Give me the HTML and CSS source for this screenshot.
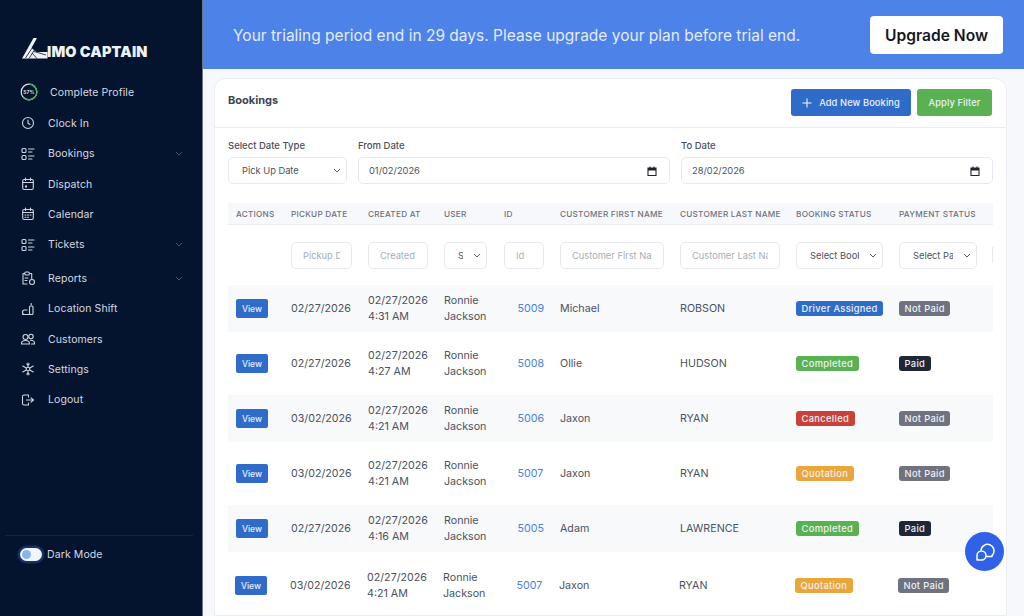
FILE: index.html
```html
<!DOCTYPE html>
<html lang="en">
<head>
<meta charset="utf-8">
<title>Limo Captain - Bookings</title>
<link rel="stylesheet" href="styles.css">
</head>
<body>
<div class="app">
  <aside class="sidebar">
    <div class="logo">
      <svg class="logo-mark" width="26" height="21" viewBox="0 0 26 21"><path d="M0 20.500 L11.500 0 L15 0 L9.500 10 L14.500 14 L25.500 14 L25.500 20.500 Z" fill="#eef1f5"/><path d="M3.500 20 L11.500 8 M7 20.500 L13 11 M10 15 L15 20.500 M12 13.500 L24 17" stroke="#04142f" stroke-width=".8" fill="none"/></svg>
      <span class="logo-text">IMO CAPTAIN</span>
    </div>
    <nav class="nav">
      <a class="nav-item nav-profile">
        <svg class="ring" width="18" height="18" viewBox="0 0 18 18"><circle cx="9" cy="9" r="7.800" fill="none" stroke="#dfe3ea" stroke-width="1.200"/><path d="M9 1.200 A7.800 7.800 0 1 1 3.400 14.400" fill="none" stroke="#44a947" stroke-width="1.200"/><text x="9" y="10.800" text-anchor="middle" class="ring-text">57%</text></svg>
        <span>Complete Profile</span>
      </a>
      <a class="nav-item">
        <svg class="ico" viewBox="0 0 16 16"><circle cx="8" cy="8" r="5.500"/><path d="M8 5v3.200l2 1.300"/></svg>
        <span>Clock In</span>
      </a>
      <a class="nav-item">
        <svg class="ico" viewBox="0 0 16 16"><rect x="2" y="2.500" width="4" height="4" rx="1"/><rect x="2" y="9.500" width="4" height="4" rx="1"/><path d="M8.500 3h5.500M8.500 6h3.500M8.500 10h5.500M8.500 13h3.500"/></svg>
        <span>Bookings</span>
        <svg class="caret" viewBox="0 0 8 5"><path d="M1 1l3 3 3-3"/></svg>
      </a>
      <a class="nav-item">
        <svg class="ico" viewBox="0 0 16 16"><rect x="2.700" y="3.500" width="10.600" height="10" rx="1.500"/><path d="M2.700 6.500h10.600M5.500 2v2.500M10.500 2v2.500"/><rect x="5" y="9.500" width="2" height="2" fill="#cfd5de" stroke="none"/></svg>
        <span>Dispatch</span>
      </a>
      <a class="nav-item">
        <svg class="ico" viewBox="0 0 16 16"><rect x="2.700" y="3.500" width="10.600" height="10" rx="1.500"/><path d="M2.700 6.500h10.600M5.500 2v2.500M10.500 2v2.500M5 9h1M7.500 9h1M10 9h1M5 11.300h1M7.500 11.300h1"/></svg>
        <span>Calendar</span>
      </a>
      <a class="nav-item nav-gap">
        <svg class="ico" viewBox="0 0 16 16"><rect x="2" y="2.500" width="4" height="4" rx="1"/><rect x="2" y="9.500" width="4" height="4" rx="1"/><path d="M8.500 3h5.500M8.500 6h3.500M8.500 10h5.500M8.500 13h3.500"/></svg>
        <span>Tickets</span>
        <svg class="caret" viewBox="0 0 8 5"><path d="M1 1l3 3 3-3"/></svg>
      </a>
      <a class="nav-item">
        <svg class="ico" viewBox="0 0 16 16"><path d="M10.500 3.500h1.200v5M7 14H3V3.500h1.500"/><rect x="4.800" y="2" width="4.500" height="3" rx="1"/><path d="M5 8h3M5 10.500h2"/><circle cx="12" cy="12" r="2.500"/></svg>
        <span>Reports</span>
        <svg class="caret" viewBox="0 0 8 5"><path d="M1 1l3 3 3-3"/></svg>
      </a>
      <a class="nav-item">
        <svg class="ico" viewBox="0 0 16 16"><path d="M2.500 13.500h7.500M7 9H4.500C3 9 2.500 10 2.500 11.200S3 13.500 4.500 13.500"/><rect x="9.500" y="5" width="3.500" height="8.500" rx="1"/><path d="M11.200 2.500v1.500"/></svg>
        <span>Location Shift</span>
      </a>
      <a class="nav-item">
        <svg class="ico" viewBox="0 0 16 16"><circle cx="5.500" cy="6" r="2.500"/><circle cx="11" cy="5.500" r="2.200"/><path d="M1.500 13v-.5c0-2 1.500-3 4-3s4 1 4 3v.5zM10.500 9.200c2.500 0 4 1 4 3v.800h-3"/></svg>
        <span>Customers</span>
      </a>
      <a class="nav-item">
        <svg class="ico" viewBox="0 0 16 16"><circle cx="8" cy="8" r="1.800"/><path d="M8 2v3.500M8 10.500V14M2.800 5l3 1.800M10.200 9.200l3 1.800M13.200 5l-3 1.800M5.800 9.200l-3 1.800"/><path d="M6.800 2.800L8 4l1.200-1.200M6.800 13.200L8 12l1.200 1.200"/></svg>
        <span>Settings</span>
      </a>
      <a class="nav-item">
        <svg class="ico" viewBox="0 0 16 16"><path d="M8.500 3H4a1.500 1.500 0 0 0-1.500 1.500v7A1.500 1.500 0 0 0 4 13h4.500M8.500 3v2M8.500 13v-2M6.500 8h7M11 5.800L13.500 8 11 10.200"/></svg>
        <span>Logout</span>
      </a>
    </nav>
    <div class="dark-mode">
      <span class="toggle"><span class="toggle-knob"></span></span>
      <span>Dark Mode</span>
    </div>
  </aside>

  <main class="main">
    <header class="banner">
      <p class="banner-text">Your trialing period end in 29 days. Please upgrade your plan before trial end.</p>
      <button class="upgrade">Upgrade Now</button>
    </header>

    <section class="card">
      <div class="card-head">
        <h1 class="card-title">Bookings</h1>
        <div class="card-actions">
          <button class="btn btn-blue">
            <svg width="10" height="10" viewBox="0 0 10 10"><path d="M5 .5v9M.5 5h9" stroke="#fff" stroke-width="1" fill="none"/></svg>
            Add New Booking
          </button>
          <button class="btn btn-green">Apply Filter</button>
        </div>
      </div>

      <div class="filters">
        <div class="field field-type">
          <label class="field-label">Select Date Type</label>
          <div class="select-wrap">
            <select class="control select-main"><option>Pick Up Date</option></select>
            <svg class="chev" viewBox="0 0 8 5"><path d="M1 1l3 3 3-3"/></svg>
          </div>
        </div>
        <div class="field field-date">
          <label class="field-label">From Date</label>
          <div class="control date-box">
            <span>01/02/2026</span>
            <svg width="10" height="10" viewBox="0 0 10 10"><path d="M1 2h8v7.500H1z" fill="none" stroke="#1f2430" stroke-width="1.100"/><path d="M1 2h8v2.500H1z" fill="#1f2430"/><path d="M3 .5v2M7 .5v2" stroke="#1f2430" stroke-width="1.100"/></svg>
          </div>
        </div>
        <div class="field field-date">
          <label class="field-label">To Date</label>
          <div class="control date-box">
            <span>28/02/2026</span>
            <svg width="10" height="10" viewBox="0 0 10 10"><path d="M1 2h8v7.500H1z" fill="none" stroke="#1f2430" stroke-width="1.100"/><path d="M1 2h8v2.500H1z" fill="#1f2430"/><path d="M3 .5v2M7 .5v2" stroke="#1f2430" stroke-width="1.100"/></svg>
          </div>
        </div>
      </div>

      <div class="table">
        <div class="row row-head">
          <div>ACTIONS</div><div>PICKUP DATE</div><div>CREATED AT</div><div>USER</div><div>ID</div><div>CUSTOMER FIRST NAME</div><div>CUSTOMER LAST NAME</div><div>BOOKING STATUS</div><div>PAYMENT STATUS</div>
        </div>
        <div class="row row-filter">
          <div></div>
          <div><input class="cell-input w61" placeholder="Pickup Date"></div>
          <div><input class="cell-input w60" placeholder="Created At"></div>
          <div class="select-wrap w43"><select class="cell-select"><option>Select User</option></select><svg class="chev" viewBox="0 0 8 5"><path d="M1 1l3 3 3-3"/></svg></div>
          <div><input class="cell-input w40" placeholder="Id"></div>
          <div><input class="cell-input w104" placeholder="Customer First Name"></div>
          <div><input class="cell-input w100" placeholder="Customer Last Name"></div>
          <div class="select-wrap w87"><select class="cell-select"><option>Select Booking Status</option></select><svg class="chev" viewBox="0 0 8 5"><path d="M1 1l3 3 3-3"/></svg></div>
          <div class="select-wrap w78"><select class="cell-select"><option>Select Payment</option></select><svg class="chev" viewBox="0 0 8 5"><path d="M1 1l3 3 3-3"/></svg></div>
          <div class="next-edge"></div>
        </div>

        <div class="row row-data row-striped">
          <div><button class="view">View</button></div><div>02/27/2026</div><div>02/27/2026<br>4:31 AM</div><div>Ronnie<br>Jackson</div><div class="id-cell"><a class="id">5009</a></div><div>Michael</div><div>ROBSON</div>
          <div><span class="badge b-blue">Driver Assigned</span></div><div><span class="badge b-gray">Not Paid</span></div>
        </div>
        <div class="row row-data row-plain">
          <div><button class="view">View</button></div><div>02/27/2026</div><div>02/27/2026<br>4:27 AM</div><div>Ronnie<br>Jackson</div><div class="id-cell"><a class="id">5008</a></div><div>Ollie</div><div>HUDSON</div>
          <div><span class="badge b-green">Completed</span></div><div><span class="badge b-dark">Paid</span></div>
        </div>
        <div class="row row-data row-striped">
          <div><button class="view">View</button></div><div>03/02/2026</div><div>02/27/2026<br>4:21 AM</div><div>Ronnie<br>Jackson</div><div class="id-cell"><a class="id">5006</a></div><div>Jaxon</div><div>RYAN</div>
          <div><span class="badge b-red">Cancelled</span></div><div><span class="badge b-gray">Not Paid</span></div>
        </div>
        <div class="row row-data row-plain">
          <div><button class="view">View</button></div><div>03/02/2026</div><div>02/27/2026<br>4:21 AM</div><div>Ronnie<br>Jackson</div><div class="id-cell"><a class="id">5007</a></div><div>Jaxon</div><div>RYAN</div>
          <div><span class="badge b-orange">Quotation</span></div><div><span class="badge b-gray">Not Paid</span></div>
        </div>
        <div class="row row-data row-striped">
          <div><button class="view">View</button></div><div>02/27/2026</div><div>02/27/2026<br>4:16 AM</div><div>Ronnie<br>Jackson</div><div class="id-cell"><a class="id">5005</a></div><div>Adam</div><div>LAWRENCE</div>
          <div><span class="badge b-green">Completed</span></div><div><span class="badge b-dark">Paid</span></div>
        </div>
        <div class="row row-data row-last">
          <div><button class="view">View</button></div><div>03/02/2026</div><div>02/27/2026<br>4:21 AM</div><div>Ronnie<br>Jackson</div><div class="id-cell"><a class="id">5007</a></div><div>Jaxon</div><div>RYAN</div>
          <div><span class="badge b-orange">Quotation</span></div><div><span class="badge b-gray">Not Paid</span></div>
        </div>
      </div>
    </section>
  </main>
</div>
<button class="chat" aria-label="Chat">
  <svg width="22" height="22" viewBox="0 0 22 22" fill="none" stroke="#fff" stroke-width="1.500" stroke-linejoin="round"><path d="M7 9.500 A6.500 6.500 0 1 1 18 14.500 L18 15.500 L12 15.500"/><path d="M3 19 L3 14.500 A4.500 4.500 0 1 1 7.500 19 Z"/></svg>
</button>
</body>
</html>
```
FILE: styles.css
```css
* { box-sizing: border-box; }
html, body { margin: 0; height: 616px; overflow: hidden; }
body { font-family: Inter, "Liberation Sans", sans-serif; color: #4b5260; background: #f7f8fb; }
.app { display: flex; height: 616px; }

.sidebar { width: 203px; flex: none; background: #04142f; border-right: 1px solid #6d7688; display: flex; flex-direction: column; padding: 38px 0 0 0; color: #d5d9e0; }
.logo { display: flex; align-items: flex-end; padding-left: 22px; height: 21px; }
.logo-mark { flex: none; margin-right: -1px; }
.logo-text { font-size: 14.400px; font-weight: 900; color: #eef1f5; line-height: 14px; letter-spacing: .2px; }
.nav { margin-top: 17.500px; display: flex; flex-direction: column; }
.nav-item { display: flex; align-items: center; height: 30.300px; padding-left: 20px; font-size: 10.500px; color: #d5d9e0; letter-spacing: .1px; }
.nav-item > span { margin-left: 12px; }
.nav-profile { height: 31.800px; }
.nav-gap { margin-bottom: 3.500px; }
.ico { width: 16px; height: 16px; fill: none; stroke: #cfd5de; stroke-width: 1.100; flex: none; stroke-linecap: round; stroke-linejoin: round; }
.ring { flex: none; }
.ring-text { font-size: 5px; fill: #e6e9ee; font-weight: 600; }
.caret { width: 8px; height: 5px; margin-left: auto; margin-right: 19px; fill: none; stroke: #48536a; stroke-width: 1; }
.dark-mode { margin: auto 9px 0 5px; border-top: 1px solid #18243d; height: 81px; padding: 12px 0 0 15px; display: flex; align-items: flex-start; gap: 5px; font-size: 10.500px; line-height: 14px; color: #d5d9e0; letter-spacing: .1px; }
.toggle { width: 22px; height: 13px; border-radius: 7px; background: #f2f5fa; box-shadow: 0 0 0 2.500px #123266; display: block; padding: 2px 0 0 2px; flex: none; }
.toggle-knob { display: block; width: 9px; height: 9px; border-radius: 50%; background: #8db4e8; }

.main { flex: 1; min-width: 0; display: flex; flex-direction: column; }
.banner { height: 69px; flex: none; background: #4d82e8; display: flex; align-items: center; justify-content: space-between; padding: 0 21px 0 30px; }
.banner-text { margin: 1px 0 0; font-size: 15.500px; color: #e4ecfb; }
.upgrade { width: 133px; height: 38px; border: 0; background: #fff; border-radius: 4px; font: 600 15.600px Inter, sans-serif; color: #15181f; padding: 1px 0 0; }

.card { margin: 9px 17px 0 11px; background: #fff; border: 1px solid #eceef2; border-radius: 12px 12px 0 0; flex: 1; min-height: 0; overflow: hidden; }
.card-head { height: 49px; border-bottom: 1px solid #e9ebef; display: flex; justify-content: space-between; padding: 10px 14px 0 13px; }
.card-title { margin: 4px 0 0; font-size: 11px; font-weight: 700; color: #3d4553; line-height: 15px; }
.card-actions { display: flex; gap: 6px; }
.btn { height: 27px; border: 0; border-radius: 3px; color: #eaf0fa; font: 500 9.300px Inter, sans-serif; display: flex; align-items: center; justify-content: center; padding: 0; letter-spacing: .1px; }
.btn-blue { width: 120px; background: #2f6cca; gap: 7px; }
.btn-green { width: 75px; background: #5ab152; }

.filters { display: flex; gap: 11px; padding: 11px 13px 0 13px; }
.field { display: flex; flex-direction: column; }
.field-type { width: 119px; flex: none; }
.field-date { flex: 1; }
.field-label { font-size: 9.500px; font-weight: 500; color: #484f5d; line-height: 14px; margin-bottom: 4px; }
.control { height: 27px; width: 100%; border: 1px solid #e7e9ee; border-radius: 5px; background: #fff; font: 400 9.300px Inter, sans-serif; color: #4b5260; }
.select-main { appearance: none; padding: 0 20px 0 13px; display: block; }
.date-box { display: flex; align-items: center; justify-content: space-between; padding: 0 12px 0 10px; }
.select-wrap { position: relative; }
.chev { position: absolute; right: 6px; top: 50%; margin-top: -2.500px; width: 8px; height: 5px; fill: none; stroke: #555c69; stroke-width: 1; }

.table { margin: 19px 13px 0 13px; }
.row { display: grid; grid-template-columns: 55px 77px 76px 60px 56px 120px 116px 103px 101px 1px; width: 765px; }
.row > div { padding-left: 8px; }
.row-head { height: 22px; background: #f7f8fb; border-bottom: 1px solid #eceef2; align-items: center; font-size: 8.200px; font-weight: 500; color: #6c7280; letter-spacing: .25px; }
.row-filter { height: 60px; align-items: center; }
.row-filter > div { padding-left: 0; margin-left: 8px; }
.row-filter > .next-edge { margin: 0; padding: 0; height: 16px; border-left: 1px solid #e7e9ee; }
.cell-input { height: 27px; border: 1px solid #e7e9ee; border-radius: 5px; font: 400 9.300px Inter, sans-serif; color: #4b5260; padding: 0 11px; display: block; background: #fff; }
.cell-input::placeholder { color: #a8adb7; opacity: 1; }
.cell-select { appearance: none; height: 27px; width: 100%; border: 1px solid #e7e9ee; border-radius: 5px; font: 400 9.300px Inter, sans-serif; color: #4b5260; padding: 0 23px 0 13px; background: #fff; display: block; }
.w61 { width: 61px; } .w60 { width: 60px; } .w43 { width: 43px; } .w40 { width: 40px; }
.w104 { width: 104px; } .w100 { width: 100px; } .w87 { width: 87px; } .w78 { width: 78px; }

.row-data { align-items: center; font-size: 10.700px; line-height: 15.500px; color: #4b5260; }
.row-striped { height: 47px; background: #f8f9fb; }
.row-plain { height: 63px; }
.row-last { height: 67px; transform: translateX(-1px); }
.row > .id-cell { padding-left: 21.500px; }
.view { display: block; width: 32px; height: 19px; padding: 0; border: 0; border-radius: 2px; background: #2f6cca; color: #e7eefa; font: 500 8.500px Inter, sans-serif; }
.id { color: #4a82dc; }
.badge { display: inline-block; height: 15px; line-height: 15px; padding: 0 5.500px; border-radius: 3px; color: #eef1f6; font-size: 9.300px; font-weight: 500; letter-spacing: .35px; vertical-align: middle; }
.b-blue { background: #2f6cca; }
.b-green { background: #5ab152; }
.b-red { background: #c9423a; }
.b-orange { background: #eba63a; }
.b-gray { background: #6f727f; }
.b-dark { background: #1e2736; }

.chat { position: fixed; left: 965px; top: 532px; width: 39px; height: 39px; border-radius: 50%; border: 0; background: #2f62e6; padding: 0; display: flex; align-items: center; justify-content: center; }
```
